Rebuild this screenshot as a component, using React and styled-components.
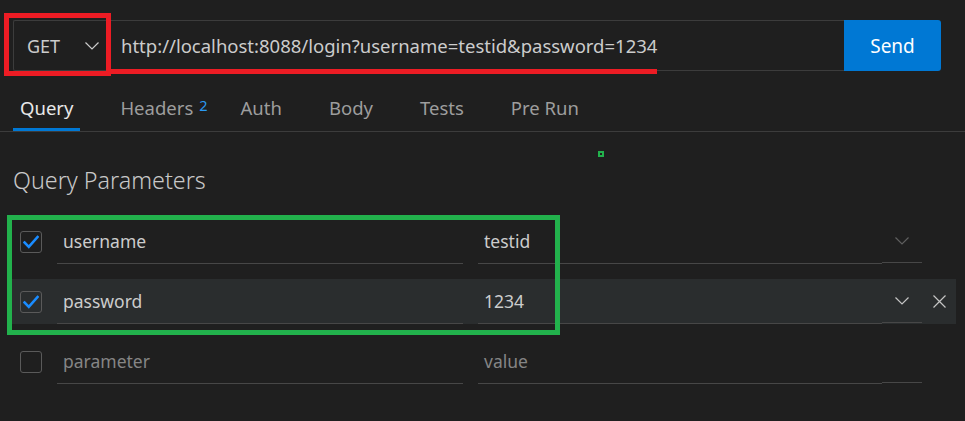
import React from "react";
import styled, { createGlobalStyle } from "styled-components";

const Global = createGlobalStyle`
  html, body { margin: 0; padding: 0; background: #1f1f1f; }
  body { font-family: "Noto Sans", "Open Sans", sans-serif; color: #cccccc; }
  * { box-sizing: border-box; }
`;

const Page = styled.div`
  position: relative;
  width: 965px;
  height: 421px;
  background: #1f1f1f;
  padding-top: 20px;
  overflow: hidden;
`;

const UrlBar = styled.div`
  display: flex;
  height: 51px;
  margin: 0 24px 0 13px;
`;

const MethodSelect = styled.div`
  width: 94px;
  display: flex;
  align-items: center;
  justify-content: space-between;
  padding: 0 8px 0 13px;
  border: 1px solid #3c3c3c;
  border-right: none;
  border-radius: 2px 0 0 2px;
  font-size: 18px;
  color: #cccccc;
`;

const UrlInput = styled.div`
  flex: 1;
  display: flex;
  align-items: center;
  padding-left: 13px;
  border-top: 1px solid #3c3c3c;
  border-bottom: 1px solid #3c3c3c;
  border-left: 1px solid #3c3c3c;
  font-size: 18.5px;
  color: #cccccc;
  white-space: nowrap;
`;

const SendButton = styled.div`
  width: 97px;
  display: flex;
  align-items: center;
  justify-content: center;
  background: #0078d4;
  color: #ffffff;
  font-size: 19px;
  border-radius: 0 3px 3px 0;
`;

const TabBar = styled.div`
  display: flex;
  gap: 33px;
  margin-top: 16px;
  padding: 0 13px;
  border-bottom: 1px solid #3c3c3c;
`;

const Tab = styled.div`
  height: 44px;
  display: flex;
  align-items: center;
  padding: 0 7px;
  font-size: 18.5px;
  color: ${(p) => (p.$active ? "#e8e8e8" : "#9d9d9d")};
  border-bottom: 3px solid ${(p) => (p.$active ? "#0078d4" : "transparent")};
`;

const Badge = styled.span`
  font-size: 14.5px;
  color: #2b9af3;
  margin-left: 6px;
  margin-right: -14px;
  align-self: flex-start;
  margin-top: 11px;
  line-height: 1;
`;

const Heading = styled.h2`
  margin: 24px 0 0 13px;
  font-size: 23.3px;
  font-weight: 300;
  color: #c8c8c8;
  line-height: 48px;
  height: 48px;
`;

const Rows = styled.div`
  display: flex;
  flex-direction: column;
  gap: 15px;
  margin: 15px 9px 0 12px;
`;

const Row = styled.div`
  height: 45px;
  display: flex;
  align-items: stretch;
  padding-left: 8px;
  background: ${(p) => (p.$hover ? "#2a2d2e" : "transparent")};
`;

const Check = styled.div`
  width: 22px;
  height: 22px;
  align-self: center;
  border: 1px solid #5a5a5a;
  border-radius: 3px;
  display: flex;
  align-items: center;
  justify-content: center;
  margin-right: 15px;
`;

const Field = styled.div`
  width: ${(p) => p.$w}px;
  margin-right: ${(p) => p.$mr || 0}px;
  display: flex;
  align-items: center;
  padding-left: 6px;
  border-bottom: 1px solid #474747;
  font-size: 17.5px;
  color: ${(p) => (p.$placeholder ? "#858585" : "#cccccc")};
`;

const DropCell = styled.div`
  width: 40px;
  display: flex;
  align-items: center;
  justify-content: center;
  border-bottom: 1px solid #474747;
  margin-bottom: 1px;
`;

const CloseCell = styled.div`
  width: 34px;
  display: flex;
  align-items: center;
  justify-content: center;
`;

const Annot = styled.div`
  position: absolute;
  left: ${(p) => p.$x}px;
  top: ${(p) => p.$y}px;
  width: ${(p) => p.$w}px;
  height: ${(p) => p.$h}px;
  border: ${(p) => p.$t}px solid ${(p) => p.$c};
  pointer-events: none;
`;

const Underline = styled.div`
  position: absolute;
  left: 110px;
  top: 69px;
  width: 547px;
  height: 5px;
  background: #ed1c24;
`;

const Chevron = ({ color = "#cccccc", w = 14 }) => (
  <svg width={w} height={w / 2 + 1} viewBox="0 0 14 8" fill="none">
    <path d="M0.5 0.5 L7 7 L13.5 0.5" stroke={color} strokeWidth="1.2" />
  </svg>
);

const CheckMark = () => (
  <svg width="16" height="14" viewBox="0 0 16 14" fill="none">
    <path d="M1.5 7.5 L5.8 11.8 L14.5 2" stroke="#1a8cff" strokeWidth="2.6" strokeLinecap="square" />
  </svg>
);

const CloseIcon = () => (
  <svg width="13" height="13" viewBox="0 0 13 13" fill="none">
    <path d="M0.5 0.5 L12.5 12.5 M12.5 0.5 L0.5 12.5" stroke="#c5c5c5" strokeWidth="1.2" />
  </svg>
);

const params = [
  { key: "username", value: "testid", checked: true, chev: "#5f5f5f" },
  { key: "password", value: "1234", checked: true, hover: true, chev: "#c5c5c5" },
  { key: "parameter", value: "value", placeholder: true },
];

export default function App() {
  return (
    <Page>
      <Global />
      <UrlBar>
        <MethodSelect>
          GET
          <Chevron color="#cccccc" />
        </MethodSelect>
        <UrlInput>http://localhost:8088/login?username=testid&amp;password=1234</UrlInput>
        <SendButton>Send</SendButton>
      </UrlBar>
      <TabBar>
        <Tab $active>Query</Tab>
        <Tab>
          Headers<Badge>2</Badge>
        </Tab>
        <Tab>Auth</Tab>
        <Tab>Body</Tab>
        <Tab>Tests</Tab>
        <Tab>Pre Run</Tab>
      </TabBar>
      <Heading>Query Parameters</Heading>
      <Rows>
        {params.map((p) => (
          <Row key={p.key} $hover={p.hover}>
            <Check>{p.checked && <CheckMark />}</Check>
            <Field $w={406} $mr={15} $placeholder={p.placeholder}>{p.key}</Field>
            <Field $w={404} $placeholder={p.placeholder}>{p.value}</Field>
            <DropCell>{p.chev && <Chevron color={p.chev} />}</DropCell>
            <CloseCell>{p.hover && <CloseIcon />}</CloseCell>
          </Row>
        ))}
      </Rows>
      <Annot $x={4} $y={13} $w={107} $h={63} $t={5} $c="#ed1c24" />
      <Underline />
      <Annot $x={7} $y={215} $w={553} $h={120} $t={5} $c="#22b14c" />
      <Annot $x={598} $y={151} $w={6} $h={6} $t={2} $c="#22b14c" />
    </Page>
  );
}
